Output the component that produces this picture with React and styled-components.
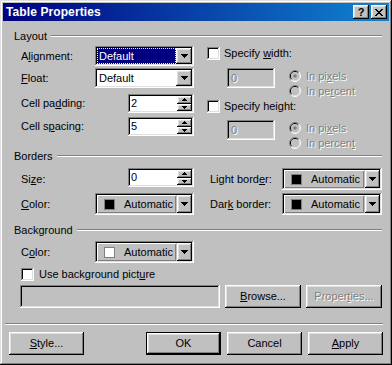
import React from 'react';
import styled, { createGlobalStyle, css } from 'styled-components';

const Global = createGlobalStyle`
  html, body { margin: 0; padding: 0; background: #c0c0c0; }
  body { font-family: "Liberation Sans", Arial, sans-serif; font-size: 11px; }
  * { box-sizing: border-box; }
`;

const raised = css`
  box-shadow: inset -1px -1px #000, inset 1px 1px #fff, inset -2px -2px #808080, inset 2px 2px #dfdfdf;
`;
const sunken = css`
  box-shadow: inset -1px -1px #fff, inset 1px 1px #808080, inset -2px -2px #dfdfdf, inset 2px 2px #000;
`;

const Window = styled.div`
  width: 392px;
  height: 365px;
  background: #c0c0c0;
  padding: 3px;
  box-shadow: inset -1px -1px #000, inset 1px 1px #dfdfdf, inset -2px -2px #808080, inset 2px 2px #fff;
  display: flex;
  flex-direction: column;
  color: #000;
  font-family: "Liberation Sans", Arial, sans-serif;
  font-size: 11px;
  line-height: 13px;
`;

const TitleBar = styled.div`
  height: 18px;
  flex: none;
  display: flex;
  align-items: center;
  padding: 0 2px 0 3px;
  background: linear-gradient(90deg, #000080, #1084d0);
  color: #fff;
  font-weight: bold;
  font-size: 12px;
`;
const Title = styled.div`
  flex: 1;
  letter-spacing: 0.1px;
`;
const CapButton = styled.div`
  width: 16px;
  height: 14px;
  ${raised};
  background: #c0c0c0;
  color: #000;
  display: flex;
  align-items: center;
  justify-content: center;
  font-size: 11px;
  font-weight: bold;
  margin-left: ${p => p.$gap || 0}px;
`;

const Content = styled.div`
  padding: 0 7px 0 11px;
  display: flex;
  flex-direction: column;
`;

const GroupHeader = styled.div`
  display: flex;
  align-items: center;
  height: 14px;
  margin-top: ${p => p.$mt || 0}px;
`;
const GroupLabel = styled.span`
  padding-right: 4px;
`;
const Etch = styled.div`
  flex: 1;
  height: 2px;
  border-top: 1px solid #808080;
  border-bottom: 1px solid #fff;
`;

const GroupBody = styled.div`
  display: flex;
  flex-direction: ${p => (p.$column ? 'column' : 'row')};
  align-items: flex-start;
  padding-left: 7px;
  gap: ${p => p.$gap || 0}px;
`;
const Col = styled.div`
  display: flex;
  flex-direction: column;
  width: ${p => (p.$w ? `${p.$w}px` : 'auto')};
  flex: ${p => (p.$w ? 'none' : 1)};
`;
const FieldRow = styled.div`
  display: flex;
  align-items: center;
  height: ${p => p.$h}px;
  margin-top: ${p => p.$mt || 0}px;
  margin-left: ${p => p.$ml || 0}px;
  gap: ${p => p.$gap || 0}px;
`;
const Label = styled.span`
  width: ${p => p.$w}px;
  flex: none;
  white-space: nowrap;
`;
const Key = styled.span`
  text-decoration: underline;
`;
const Dim = styled.span`
  color: #808080;
  text-shadow: 1px 1px 0 #fff;
  white-space: nowrap;
`;

const ComboField = styled.div`
  width: 99px;
  height: 20px;
  ${sunken};
  background: #fff;
  padding: 2px;
  display: flex;
  flex: none;
`;
const ComboValue = styled.div`
  flex: 1;
  display: flex;
  align-items: center;
  padding-left: 2px;
  ${p =>
    p.$focused &&
    css`
      background: #000080;
      color: #fff;
      outline: 1px dotted #ffff80;
      outline-offset: -1px;
    `}
`;
const DropBtn = styled.div`
  width: ${p => p.$w || 16}px;
  flex: none;
  ${raised};
  background: #c0c0c0;
  display: flex;
  align-items: center;
  justify-content: center;
`;

const SpinField = styled.div`
  width: 66px;
  height: 19px;
  flex: none;
  align-self: flex-start;
  margin-top: ${p => p.$mt || 0}px;
  ${sunken};
  background: #fff;
  padding: 2px;
  display: flex;
`;
const SpinText = styled.div`
  flex: 1;
  display: flex;
  align-items: center;
  padding-left: 1px;
`;
const SpinBtns = styled.div`
  width: 15px;
  display: flex;
  flex-direction: column;
`;
const SpinBtn = styled.div`
  flex: 1;
  ${raised};
  background: #c0c0c0;
  display: flex;
  align-items: center;
  justify-content: center;
`;

const ColorField = styled.div`
  width: ${p => p.$w}px;
  height: 22px;
  flex: none;
  ${sunken};
  background: #c0c0c0;
  padding: 2px;
  display: flex;
  gap: 1px;
`;
const ColorFace = styled.div`
  flex: 1;
  display: flex;
  align-items: center;
  padding-left: 7px;
  gap: 9px;
  box-shadow: inset 1px 1px #fff, inset -1px -1px #808080;
`;
const Swatch = styled.div`
  width: 11px;
  height: 11px;
  background: ${p => p.$color};
  border: 1px solid #808080;
`;

const Checkbox = styled.div`
  width: 13px;
  height: 13px;
  flex: none;
  background: #fff;
  ${sunken};
`;
const CheckRow = styled.div`
  display: flex;
  align-items: center;
  height: 13px;
  gap: ${p => p.$gap || 4}px;
  margin-top: ${p => p.$mt || 0}px;
`;

const SubRow = styled.div`
  display: flex;
  align-items: flex-start;
  padding-left: 20px;
  margin-top: ${p => p.$mt || 0}px;
`;
const TextBox = styled.div`
  width: ${p => p.$w}px;
  height: ${p => p.$h}px;
  flex: none;
  ${sunken};
  background: ${p => (p.$disabled ? '#c0c0c0' : '#fff')};
  padding: 0 4px;
  display: flex;
  align-items: center;
`;
const RadioGroup = styled.div`
  display: flex;
  flex-direction: column;
  gap: 3px;
  margin: 2px 0 0 14px;
`;
const RadioRow = styled.div`
  display: flex;
  align-items: center;
  gap: 5px;
  height: 12px;
`;

const Button = styled.div`
  width: ${p => p.$w || 75}px;
  height: 23px;
  flex: none;
  background: #c0c0c0;
  ${raised};
  display: flex;
  align-items: center;
  justify-content: center;
  margin-left: ${p => p.$ml || 0}px;
  ${p =>
    p.$default &&
    css`
      box-shadow: inset 0 0 0 1px #000, inset -2px -2px #000, inset 2px 2px #fff, inset -3px -3px #808080,
        inset 3px 3px #dfdfdf;
    `}
`;

const Separator = styled.div`
  height: 2px;
  margin: 15px 6px 0 2px;
  border-top: 1px solid #808080;
  border-bottom: 1px solid #fff;
`;
const Footer = styled.div`
  display: flex;
  align-items: center;
  padding: 0 6px;
  margin-top: 7px;
  gap: 6px;
`;
const Spacer = styled.div`
  flex: 1;
`;

const Arrow = () => (
  <svg width="7" height="4" viewBox="0 0 7 4" shapeRendering="crispEdges">
    <path d="M0 0h7v1H0z M1 1h5v1H1z M2 2h3v1H2z M3 3h1v1H3z" fill="#000" />
  </svg>
);
const SpinArrow = ({ up }) => (
  <svg width="5" height="3" viewBox="0 0 5 3" shapeRendering="crispEdges">
    {up ? (
      <path d="M2 0h1v1H2z M1 1h3v1H1z M0 2h5v1H0z" fill="#000" />
    ) : (
      <path d="M0 0h5v1H0z M1 1h3v1H1z M2 2h1v1H2z" fill="#000" />
    )}
  </svg>
);
const CloseGlyph = () => (
  <svg width="8" height="7" viewBox="0 0 8 7" shapeRendering="crispEdges">
    <path
      d="M0 0h2v1H0z M6 0h2v1H6z M1 1h2v1H1z M5 1h2v1H5z M2 2h4v1H2z M3 3h2v1H3z M2 4h4v1H2z M1 5h2v1H1z M5 5h2v1H5z M0 6h2v1H0z M6 6h2v1H6z"
      fill="#000"
    />
  </svg>
);
const Radio = ({ checked }) => (
  <svg width="12" height="12" viewBox="0 0 12 12" style={{ flex: 'none' }}>
    <path d="M2.1 9.9A5.5 5.5 0 0 1 9.9 2.1" stroke="#808080" fill="none" />
    <path d="M9.9 2.1A5.5 5.5 0 0 1 2.1 9.9" stroke="#fff" fill="none" />
    <path d="M2.8 9.2A4.5 4.5 0 0 1 9.2 2.8" stroke="#000" fill="none" />
    <path d="M9.2 2.8A4.5 4.5 0 0 1 2.8 9.2" stroke="#dfdfdf" fill="none" />
    <circle cx="6" cy="6" r="4" fill="#c0c0c0" />
    {checked && <circle cx="6" cy="6" r="1.8" fill="#808080" />}
  </svg>
);

const Combo = ({ value, focused }) => (
  <ComboField>
    <ComboValue $focused={focused}>{value}</ComboValue>
    <DropBtn>
      <Arrow />
    </DropBtn>
  </ComboField>
);
const Spinner = ({ value, mt }) => (
  <SpinField $mt={mt}>
    <SpinText>{value}</SpinText>
    <SpinBtns>
      <SpinBtn>
        <SpinArrow up />
      </SpinBtn>
      <SpinBtn>
        <SpinArrow />
      </SpinBtn>
    </SpinBtns>
  </SpinField>
);
const ColorCombo = ({ w, color }) => (
  <ColorField $w={w}>
    <ColorFace>
      <Swatch $color={color} />
      <span>Automatic</span>
    </ColorFace>
    <DropBtn $w={15}>
      <Arrow />
    </DropBtn>
  </ColorField>
);
const SizeOption = ({ pixelsLabel, percentLabel }) => (
  <RadioGroup>
    <RadioRow>
      <Radio checked />
      <Dim>{pixelsLabel}</Dim>
    </RadioRow>
    <RadioRow>
      <Radio />
      <Dim>{percentLabel}</Dim>
    </RadioRow>
  </RadioGroup>
);

export default function App() {
  return (
    <>
      <Global />
      <Window>
        <TitleBar>
          <Title>Table Properties</Title>
          <CapButton>?</CapButton>
          <CapButton $gap={2}>
            <CloseGlyph />
          </CapButton>
        </TitleBar>
        <Content>
          <GroupHeader $mt={8}>
            <GroupLabel>Layout</GroupLabel>
            <Etch />
          </GroupHeader>
          <GroupBody $gap={13}>
            <Col $w={173}>
              <FieldRow $h={20} $mt={3}>
                <Label $w={74}>
                  A<Key>l</Key>ignment:
                </Label>
                <Combo value="Default" focused />
              </FieldRow>
              <FieldRow $h={20} $mt={2}>
                <Label $w={74}>
                  <Key>F</Key>loat:
                </Label>
                <Combo value="Default" />
              </FieldRow>
              <FieldRow $h={19} $mt={6}>
                <Label $w={107}>
                  Cell pa<Key>d</Key>ding:
                </Label>
                <Spinner value="2" />
              </FieldRow>
              <FieldRow $h={19} $mt={4}>
                <Label $w={107}>
                  Cell s<Key>p</Key>acing:
                </Label>
                <Spinner value="5" />
              </FieldRow>
            </Col>
            <Col>
              <CheckRow $mt={4}>
                <Checkbox />
                <span>
                  Specify <Key>w</Key>idth:
                </span>
              </CheckRow>
              <SubRow $mt={8}>
                <TextBox $w={48} $h={20} $disabled>
                  <Dim>0</Dim>
                </TextBox>
                <SizeOption
                  pixelsLabel={
                    <>
                      In pi<Key>x</Key>els
                    </>
                  }
                  percentLabel={
                    <>
                      In pe<Key>r</Key>cent
                    </>
                  }
                />
              </SubRow>
              <CheckRow $mt={3}>
                <Checkbox />
                <span>
                  Specify hei<Key>g</Key>ht:
                </span>
              </CheckRow>
              <SubRow $mt={7}>
                <TextBox $w={48} $h={20} $disabled>
                  <Dim>0</Dim>
                </TextBox>
                <SizeOption
                  pixelsLabel={
                    <>
                      In pi<Key>x</Key>els
                    </>
                  }
                  percentLabel={
                    <>
                      In percen<Key>t</Key>
                    </>
                  }
                />
              </SubRow>
            </Col>
          </GroupBody>

          <GroupHeader>
            <GroupLabel>Borders</GroupLabel>
            <Etch />
          </GroupHeader>
          <GroupBody $gap={16}>
            <Col $w={173}>
              <FieldRow $h={22} $mt={5}>
                <Label $w={107}>
                  Si<Key>z</Key>e:
                </Label>
                <Spinner value="0" />
              </FieldRow>
              <FieldRow $h={22} $mt={3}>
                <Label $w={74}>
                  <Key>C</Key>olor:
                </Label>
                <ColorCombo w={99} color="#000" />
              </FieldRow>
            </Col>
            <Col>
              <FieldRow $h={22} $mt={5}>
                <Label $w={72}>
                  Light bord<Key>e</Key>r:
                </Label>
                <ColorCombo w={100} color="#000" />
              </FieldRow>
              <FieldRow $h={22} $mt={3}>
                <Label $w={72}>
                  Dar<Key>k</Key> border:
                </Label>
                <ColorCombo w={100} color="#000" />
              </FieldRow>
            </Col>
          </GroupBody>

          <GroupHeader $mt={8}>
            <GroupLabel>Background</GroupLabel>
            <Etch />
          </GroupHeader>
          <GroupBody $column>
            <FieldRow $h={22} $mt={4}>
              <Label $w={74}>
                C<Key>o</Key>lor:
              </Label>
              <ColorCombo w={99} color="#fff" />
            </FieldRow>
            <CheckRow $mt={5} $gap={5}>
              <Checkbox />
              <span>
                Use background pict<Key>u</Key>re
              </span>
            </CheckRow>
            <FieldRow $h={23} $mt={4} $ml={-1}>
              <TextBox $w={200} $h={23} $disabled />
              <Button $w={76} $ml={5}>
                <span>
                  <Key>B</Key>rowse...
                </span>
              </Button>
              <Button $w={76} $ml={5}>
                <Dim>
                  Proper<Key>t</Key>ies...
                </Dim>
              </Button>
            </FieldRow>
          </GroupBody>
        </Content>
        <Separator />
        <Footer>
          <Button>
            <span>
              <Key>S</Key>tyle...
            </span>
          </Button>
          <Spacer />
          <Button $default>OK</Button>
          <Button>Cancel</Button>
          <Button>
            <span>
              <Key>A</Key>pply
            </span>
          </Button>
        </Footer>
      </Window>
    </>
  );
}
